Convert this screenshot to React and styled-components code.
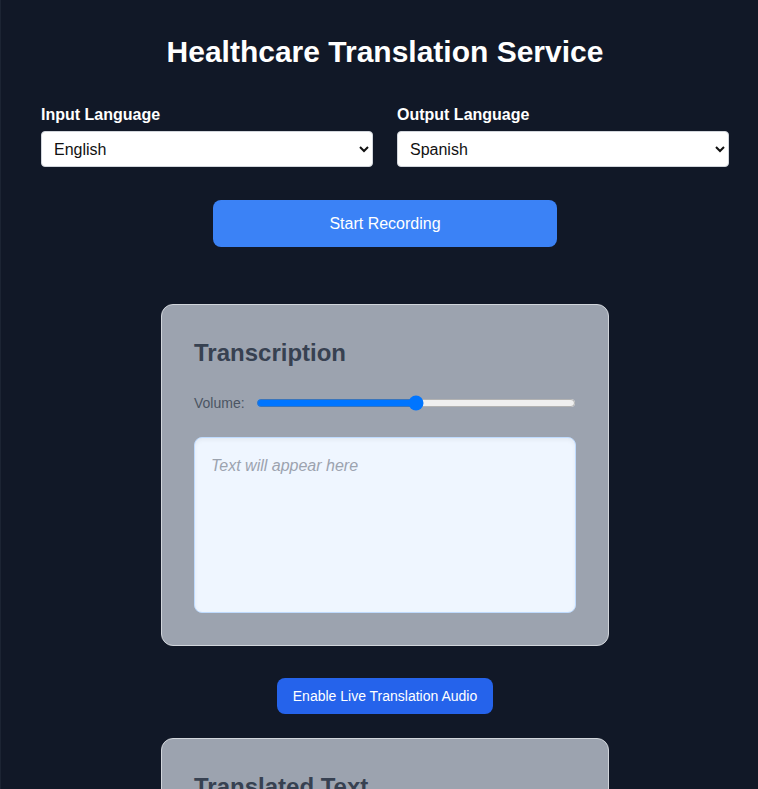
import styled, { createGlobalStyle } from 'styled-components'

const GlobalStyle = createGlobalStyle`
    html, body {
        margin: 0;
        padding: 0;
        background: #111827;
        overflow: hidden;
    }
    body {
        font-family: "Liberation Sans", Arial, sans-serif;
    }
`

const Page = styled.main`
    box-sizing: border-box;
    width: 769px;
    min-height: 100vh;
    padding: 34px 40px 40px;
    background: #111827;
    border-left: 1px solid #1c2433;
    color: #fff;
`

const Title = styled.h1`
    margin: 0 0 33px;
    text-align: center;
    font-size: 30px;
    line-height: 36px;
    font-weight: 700;
`

const LanguageGrid = styled.div`
    display: grid;
    grid-template-columns: 1fr 1fr;
    gap: 24px;
    margin-bottom: 33px;
`

const Field = styled.div`
    display: flex;
    flex-direction: column;
`

const Label = styled.label`
    font-size: 16px;
    line-height: 24px;
    font-weight: 700;
    margin-bottom: 4px;
`

const Select = styled.select`
    box-sizing: border-box;
    height: 36px;
    padding: 0 8px;
    font-family: inherit;
    font-size: 16px;
    color: #111;
    background: #fff;
    border: 1px solid #d1d5db;
    border-radius: 4px;
`

const Center = styled.div`
    display: flex;
    justify-content: center;
    margin-bottom: ${props => props.$mb || 0}px;
`

const RecordButton = styled.button`
    width: 344px;
    height: 47px;
    border: none;
    border-radius: 8px;
    background: #3b82f6;
    color: #fff;
    font-family: inherit;
    font-size: 16px;
    cursor: pointer;
`

const AudioButton = styled.button`
    height: 36px;
    padding: 0 16px;
    border: none;
    border-radius: 8px;
    background: #2563eb;
    color: #fff;
    font-family: inherit;
    font-size: 14px;
    cursor: pointer;
`

const Card = styled.section`
    box-sizing: border-box;
    width: 448px;
    margin: 0 auto ${props => props.$mb || 0}px;
    padding: 32px;
    background: #9ca3af;
    border: 1px solid #d1d5db;
    border-radius: 12px;
`

const CardTitle = styled.h2`
    margin: 0 0 24px;
    font-size: 24px;
    line-height: 32px;
    font-weight: 700;
    color: #374151;
`

const VolumeRow = styled.div`
    display: flex;
    align-items: center;
    gap: 11px;
    height: 20px;
    margin-bottom: 24px;
    font-size: 14px;
    color: #4b5563;
`

const Range = styled.input`
    flex: 1;
    margin: 0;
`

const TextBox = styled.textarea`
    box-sizing: border-box;
    display: block;
    width: 100%;
    height: 176px;
    padding: 16px;
    resize: none;
    font-family: inherit;
    font-size: 16px;
    line-height: 24px;
    color: #1f2937;
    background: #eff6ff;
    border: 1px solid #bfdbfe;
    border-radius: 8px;
    box-shadow: inset 0 2px 4px rgba(0, 0, 0, 0.05);
    outline: none;

    &::placeholder {
        color: #9ca3af;
        font-style: italic;
    }
`

const App = () => {
    return (
        <>
            <GlobalStyle />
            <Page>
                <Title>Healthcare Translation Service</Title>
                <LanguageGrid>
                    <Field>
                        <Label>Input Language</Label>
                        <Select defaultValue='en'>
                            <option value='en'>English</option>
                            <option value='es'>Spanish</option>
                            <option value='fr'>French</option>
                        </Select>
                    </Field>
                    <Field>
                        <Label>Output Language</Label>
                        <Select defaultValue='es'>
                            <option value='en'>English</option>
                            <option value='es'>Spanish</option>
                            <option value='fr'>French</option>
                        </Select>
                    </Field>
                </LanguageGrid>
                <Center $mb={57}>
                    <RecordButton>Start Recording</RecordButton>
                </Center>
                <Card $mb={32}>
                    <CardTitle>Transcription</CardTitle>
                    <VolumeRow>
                        <span>Volume:</span>
                        <Range type='range' min='0' max='1' step='0.01' defaultValue='0.5' />
                    </VolumeRow>
                    <TextBox readOnly placeholder='Text will appear here' />
                </Card>
                <Center $mb={24}>
                    <AudioButton>Enable Live Translation Audio</AudioButton>
                </Center>
                <Card>
                    <CardTitle>Translated Text</CardTitle>
                    <TextBox readOnly placeholder='Translation will appear here' />
                </Card>
            </Page>
        </>
    )
}

export default App
